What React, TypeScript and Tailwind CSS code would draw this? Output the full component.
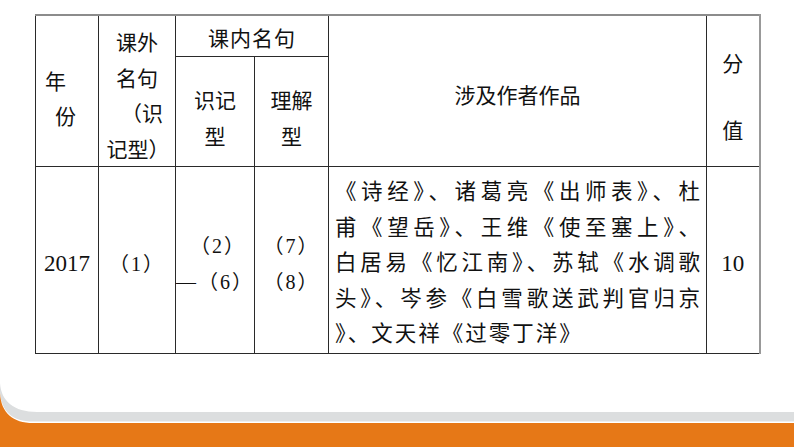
import React from "react";

const sans = "font-['Noto_Sans_CJK_SC','Noto_Sans',sans-serif]";
const serif = "font-['Liberation_Serif','Noto_Sans_CJK_SC',serif]";

const works = [
  "《诗经》、诸葛亮《出师表》、杜",
  "甫《望岳》、王维《使至塞上》、",
  "白居易《忆江南》、苏轼《水调歌",
  "头》、岑参《白雪歌送武判官归京",
];

function BottomBand() {
  return (
    <svg width="794" height="64" viewBox="0 0 794 64" className="block mt-auto shrink-0">
      <path d="M0 0 C1 18 14 29 37 29 L794 29 L794 64 L0 64 Z" fill="#dcdedf" />
      <path d="M0 8.5 C1 29 13 38.5 33 38.5 L794 38.5 L794 64 L0 64 Z" fill="#ffffff" />
      <path d="M0 10 C1 30 13 40 33 40 L794 40 L794 64 L0 64 Z" fill="#e67817" />
    </svg>
  );
}

function App() {
  const cell = "border border-[#2a2a2a] p-0 text-center";
  const top = "border-t-2 border-t-[#8c8c8c]";
  return (
    <div className="w-[794px] h-[447px] bg-white flex flex-col text-[#111] overflow-hidden">
      <div className="pl-[35px] pt-[14px]">
        <table className="table-fixed border-collapse w-[724px]">
          <colgroup>
            <col className="w-[63px]" />
            <col className="w-[77px]" />
            <col className="w-[79px]" />
            <col className="w-[74px]" />
            <col className="w-[378px]" />
            <col className="w-[53px]" />
          </colgroup>
          <tbody>
            <tr className="h-[41px]">
              <td rowSpan={2} className={`${cell} ${top} align-top ${sans} text-[21px] leading-[35px]`}>
                <div className="pt-[47px] text-left">
                  <div className="pl-[9px]">年</div>
                  <div className="pl-[19px]">份</div>
                </div>
              </td>
              <td rowSpan={2} className={`${cell} ${top} align-top ${sans} text-[21px] leading-[35.5px]`}>
                <div className="pt-[8px] flex flex-col items-center">
                  <div>课外</div>
                  <div>名句</div>
                  <div className="pl-[10px]">（识</div>
                  <div className="pl-[2px]">记型）</div>
                </div>
              </td>
              <td colSpan={2} className={`${cell} ${top} ${sans} text-[21px] tracking-[1px]`}>
                <div className="pt-[3px]">课内名句</div>
              </td>
              <td rowSpan={2} className={`${cell} ${top} ${sans} text-[21px]`}>
                <div className="pt-[8px]">涉及作者作品</div>
              </td>
              <td rowSpan={2} className={`${cell} ${top} border-r-2 border-r-[#999] align-top ${sans} text-[21px]`}>
                <div className="flex flex-col items-center gap-[37px] pt-[31px]">
                  <span className="leading-[30px]">分</span>
                  <span className="leading-[30px]">值</span>
                </div>
              </td>
            </tr>
            <tr className="h-[107px]">
              <td className={`${cell} ${sans} text-[21px] leading-[36px]`}>
                <div className="pt-[10px]">识记</div>
                <div>型</div>
              </td>
              <td className={`${cell} ${sans} text-[21px] leading-[36px]`}>
                <div className="pt-[10px]">理解</div>
                <div>型</div>
              </td>
            </tr>
            <tr className="h-[186px]">
              <td className={`${cell} ${serif} text-[23px]`}>
                <div className="pt-[8px]">2017</div>
              </td>
              <td className={`${cell} ${serif} text-[20px] tracking-[2px]`}>
                <div className="pt-[8px]">（1）</div>
              </td>
              <td className={`${cell} ${serif} text-[20px] leading-[36px]`}>
                <div className="pt-[8px] pl-[6px] tracking-[2px]">（2）</div>
                <div className="text-left whitespace-nowrap tracking-[2px]">—（6）</div>
              </td>
              <td className={`${cell} ${serif} text-[20px] leading-[36px] tracking-[2px]`}>
                <div className="pt-[8px]">（7）</div>
                <div>（8）</div>
              </td>
              <td className={`${cell} align-top ${serif} text-[21.5px] leading-[35.5px]`}>
                <div className="pt-[8px] pl-[6px] pr-[6px] text-left">
                  {works.map((w) => (
                    <div key={w} className="text-justify [text-align-last:justify] whitespace-nowrap">
                      {w}
                    </div>
                  ))}
                  <div className="tracking-[2px]">》、文天祥《过零丁洋》</div>
                </div>
              </td>
              <td className={`${cell} border-r-2 border-r-[#999] ${serif} text-[23px]`}>
                <div className="pt-[8px]">10</div>
              </td>
            </tr>
          </tbody>
        </table>
      </div>
      <BottomBand />
    </div>
  );
}

export default App;
